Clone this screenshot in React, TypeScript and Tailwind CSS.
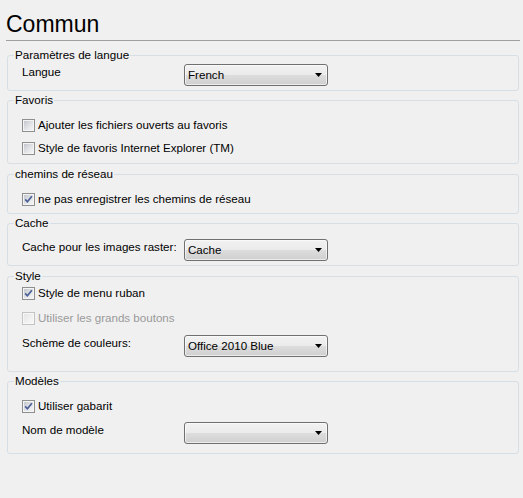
import React from "react";

function Checkbox({ checked, disabled }: { checked?: boolean; disabled?: boolean }) {
  return (
    <div
      className={
        "w-[13px] h-[13px] shrink-0 border p-[1px] " +
        (disabled ? "border-[#c4c4c4] bg-[#f7f7f7]" : "border-[#8e8f8f] bg-[#f4f4f4]")
      }
    >
      <div
        className={
          "relative w-full h-full " +
          (disabled
            ? "bg-[linear-gradient(135deg,#e6e6e6,#f8f8f8)]"
            : "bg-[linear-gradient(135deg,#c3c7cd,#e4e6e9_60%,#f4f4f5)]")
        }
      >
        {checked && (
          <svg width="9" height="9" viewBox="0 0 9 9" className="absolute left-0 top-0">
            <path d="M1.2 4.4 L3.4 6.8 L7.9 1.2" fill="none" stroke="#4a5f96" strokeWidth="1.7" />
          </svg>
        )}
      </div>
    </div>
  );
}

function CheckRow({ label, checked, disabled, className = "" }: { label: string; checked?: boolean; disabled?: boolean; className?: string }) {
  return (
    <div className={"h-[20px] flex items-center pl-[14px] gap-[3px] " + className}>
      <Checkbox checked={checked} disabled={disabled} />
      <span className={"leading-[14px] " + (disabled ? "text-[#9a9a9a]" : "text-black")}>{label}</span>
    </div>
  );
}

function Select({ value }: { value: string }) {
  return (
    <div className="w-[144px] h-[22px] shrink-0 rounded-[3px] border border-[#707070] bg-[linear-gradient(#f2f2f2_0%,#ebebeb_48%,#dddddd_52%,#cfcfcf_100%)] flex items-center pl-[3px] pr-[5px] shadow-[inset_0_0_0_1px_rgba(255,255,255,0.6)]">
      <span className="flex-1 leading-[14px] text-black">{value}</span>
      <svg width="7" height="4" viewBox="0 0 7 4">
        <polygon points="0,0 7,0 3.5,4" fill="#000" />
      </svg>
    </div>
  );
}

function SelectRow({ label, value, className = "" }: { label: string; value: string; className?: string }) {
  return (
    <div className={"flex items-start pl-[14px] " + className}>
      <span className="w-[162px] pt-[1px] leading-[14px] text-black">{label}</span>
      <Select value={value} />
    </div>
  );
}

function Group({ title, className = "", children }: { title: string; className?: string; children: React.ReactNode }) {
  return (
    <fieldset className={"ml-[7px] w-[512px] border border-[#d5dfe5] rounded-[3px] " + className}>
      <legend className="ml-[6px] px-[1px] leading-[14px] text-black">{title}</legend>
      {children}
    </fieldset>
  );
}

export default function App() {
  return (
    <div className="w-[523px] h-[498px] bg-[#f0f0f0] overflow-hidden font-['Liberation_Sans',Arial,sans-serif] text-[11.6px] text-black">
      <div className="ml-[6px] w-[514px] h-[41px] border-b border-[#a0a0a0] pt-[10px]">
        <div className="text-[23px] leading-[28px] text-black">Commun</div>
      </div>

      <Group title="Paramètres de langue" className="mt-[7px] pb-[4px]">
        <SelectRow label="Langue" value="French" className="mt-[2px]" />
      </Group>

      <Group title="Favoris" className="mt-[2px] pb-[5px]">
        <div className="mt-[8px] flex flex-col gap-[3px]">
          <CheckRow label="Ajouter les fichiers ouverts au favoris" />
          <CheckRow label="Style de favoris Internet Explorer (TM)" />
        </div>
      </Group>

      <Group title="chemins de réseau" className="mt-[3px] pb-[4px]">
        <CheckRow label="ne pas enregistrer les chemins de réseau" checked className="mt-[8px]" />
      </Group>

      <Group title="Cache" className="mt-[2px] pb-[4px]">
        <SelectRow label="Cache pour les images raster:" value="Cache" className="mt-[9px]" />
      </Group>

      <Group title="Style" className="mt-[3px] pb-[14px]">
        <div className="flex flex-col gap-[5px]">
          <CheckRow label="Style de menu ruban" checked />
          <CheckRow label="Utiliser les grands boutons" disabled />
        </div>
        <SelectRow label="Schème de couleurs:" value="Office 2010 Blue" className="mt-[7px]" />
      </Group>

      <Group title="Modèles" className="mt-[2px] pb-[9px]">
        <CheckRow label="Utiliser gabarit" checked className="mt-[8px]" />
        <SelectRow label="Nom de modèle" value="" className="mt-[6px]" />
      </Group>
    </div>
  );
}
